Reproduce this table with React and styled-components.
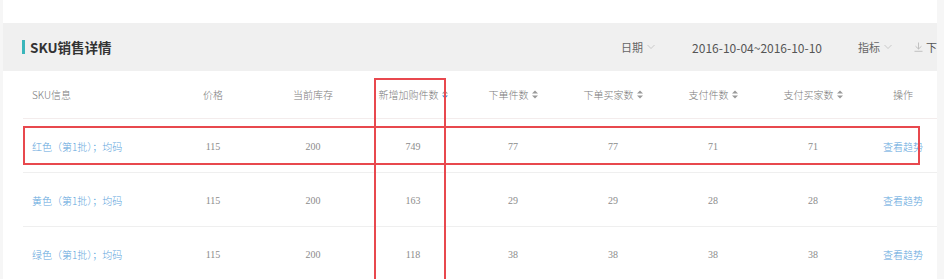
import React from 'react';
import styled, { createGlobalStyle } from 'styled-components';

const GlobalStyle = createGlobalStyle`
  html, body {
    margin: 0;
    padding: 0;
    background: #f6f6f6;
  }
  body {
    font-family: "Noto Sans CJK SC", "Noto Sans", sans-serif;
  }
`;

const Page = styled.div`
  position: relative;
  width: 944px;
  height: 279px;
  overflow: hidden;
`;

const Panel = styled.div`
  margin-left: 3px;
  width: 934px;
  height: 279px;
  padding-top: 23px;
  box-sizing: border-box;
  background: #fff;
  overflow: hidden;
`;

const Bar = styled.div`
  display: flex;
  align-items: center;
  height: 48px;
  padding-left: 19px;
  background: #f0f0f0;
  overflow: hidden;
`;

const Title = styled.h2`
  display: flex;
  align-items: center;
  margin: 0;
  font-size: 13.5px;
  font-weight: 700;
  color: #333;
  &::before {
    content: '';
    width: 3px;
    height: 14px;
    margin-right: 5px;
    background: #3ab6bb;
  }
`;

const Tools = styled.div`
  display: flex;
  align-items: center;
  margin-left: auto;
  margin-right: -11px;
  font-size: 11px;
  color: #666;
  white-space: nowrap;
`;

const Tool = styled.span`
  display: flex;
  align-items: center;
  gap: ${(p) => p.$gap || 4}px;
  margin-left: ${(p) => p.$ml || 0}px;
  font-size: ${(p) => p.$size || 11}px;
  color: ${(p) => p.$color || '#666'};
`;

const Table = styled.div`
  margin-left: 20px;
  width: 920px;
  font-family: "Liberation Serif", "Noto Sans CJK SC", serif;
  font-size: 10px;
`;

const Row = styled.div`
  display: grid;
  grid-template-columns: 140px repeat(7, 100px) 80px;
  align-items: center;
  height: ${(p) => (p.$head ? 47 : 52)}px;
  border-bottom: 1px solid ${(p) => (p.$head ? '#f3ecec' : '#efefef')};
  padding-top: ${(p) => (p.$head ? 0 : 1)}px;
`;

const Cell = styled.div`
  display: flex;
  align-items: center;
  justify-content: ${(p) => (p.$left ? 'flex-start' : 'center')};
  gap: 3px;
  padding-left: ${(p) => (p.$left ? 9 : 0)}px;
  color: ${(p) => (p.$link ? '#5ea5dc' : p.$head ? '#7a7a7a' : '#8c8c8c')};
  font-family: ${(p) => (p.$head || p.$link ? '"Noto Sans CJK SC", sans-serif' : 'inherit')};
  font-weight: ${(p) => (p.$head || p.$link ? 300 : 400)};
  white-space: nowrap;
`;

const Mark = styled.div`
  position: absolute;
  border: 2px solid #e8484e;
  box-sizing: border-box;
  pointer-events: none;
`;

const Chevron = () => (
  <svg width="8" height="6" viewBox="0 0 8 6">
    <polyline points="0.5,1 4,4.5 7.5,1" fill="none" stroke="#c4c4c4" strokeWidth="0.9" />
  </svg>
);

const DownloadIcon = () => (
  <svg width="9" height="10" viewBox="0 0 9 10">
    <line x1="4.5" y1="0.5" x2="4.5" y2="7" stroke="#bbb" strokeWidth="0.9" />
    <polyline points="1.5,4.2 4.5,7 7.5,4.2" fill="none" stroke="#bbb" strokeWidth="0.9" />
    <line x1="0.5" y1="9.3" x2="8.5" y2="9.3" stroke="#bbb" strokeWidth="0.9" />
  </svg>
);

const SortIcon = ({ active }) => (
  <svg width="6" height="9" viewBox="0 0 6 9">
    <polygon points="0,3.6 3,0.5 6,3.6" fill={active ? '#999' : '#999'} />
    <polygon points="0,5.4 3,8.5 6,5.4" fill={active ? '#3c8fd6' : '#999'} />
  </svg>
);

const columns = [
  { label: 'SKU信息' },
  { label: '价格' },
  { label: '当前库存' },
  { label: '新增加购件数', sort: true, active: true },
  { label: '下单件数', sort: true },
  { label: '下单买家数', sort: true },
  { label: '支付件数', sort: true },
  { label: '支付买家数', sort: true },
  { label: '操作' },
];

const rows = [
  ['红色（第1批）；均码', 115, 200, 749, 77, 77, 71, 71],
  ['黄色（第1批）；均码', 115, 200, 163, 29, 29, 28, 28],
  ['绿色（第1批）；均码', 115, 200, 118, 38, 38, 38, 38],
];

export default function App() {
  return (
    <>
      <GlobalStyle />
      <Page>
        <Panel>
          <Bar>
            <Title>SKU销售详情</Title>
            <Tools>
              <Tool>
                日期
                <Chevron />
              </Tool>
              <Tool $ml={37} $size={12} $color="#555">2016-10-04~2016-10-10</Tool>
              <Tool $ml={36}>
                指标
                <Chevron />
              </Tool>
              <Tool $ml={22} $gap={3} $color="#555">
                <DownloadIcon />
                下载
              </Tool>
            </Tools>
          </Bar>
          <Table>
            <Row $head>
              {columns.map((c, i) => (
                <Cell key={c.label} $head $left={i === 0}>
                  {c.label}
                  {c.sort && <SortIcon active={c.active} />}
                </Cell>
              ))}
            </Row>
            {rows.map((r) => (
              <Row key={r[0]}>
                {r.map((v, i) => (
                  <Cell key={i} $left={i === 0} $link={i === 0}>
                    {v}
                  </Cell>
                ))}
                <Cell $link>查看趋势</Cell>
              </Row>
            ))}
          </Table>
        </Panel>
        <Mark style={{ left: 374, top: 78, width: 72, height: 240 }} />
        <Mark style={{ left: 23, top: 126, width: 897, height: 39 }} />
      </Page>
    </>
  );
}
